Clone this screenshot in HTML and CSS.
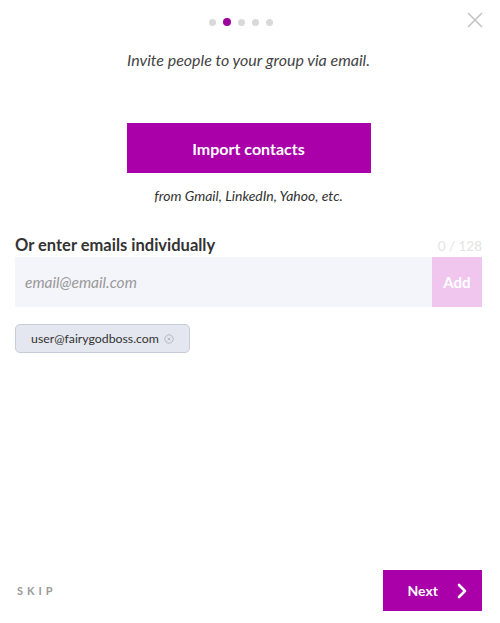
FILE: index.html
```html
<!DOCTYPE html>
<html>
<head>
<meta charset="utf-8">
<link rel="stylesheet" href="styles.css">
</head>
<body>
<div class="modal">
  <div class="header">
    <div class="dots">
      <span class="dot"></span>
      <span class="dot active"></span>
      <span class="dot"></span>
      <span class="dot"></span>
      <span class="dot"></span>
    </div>
    <button class="close" aria-label="Close">
      <svg width="16" height="16" viewBox="0 0 16 16"><path d="M1 1L15 15M15 1L1 15" stroke="#c4c4c4" stroke-width="1.6" fill="none"/></svg>
    </button>
  </div>
  <p class="subtitle">Invite people to your group via email.</p>
  <div class="import-wrap">
    <button class="import">Import contacts</button>
  </div>
  <p class="from">from Gmail, LinkedIn, Yahoo, etc.</p>
  <div class="label-row">
    <span class="label">Or enter emails individually</span>
    <span class="count">0 / 128</span>
  </div>
  <div class="input-row">
    <div class="input">email@email.com</div>
    <button class="add">Add</button>
  </div>
  <div class="chips">
    <span class="chip">user@fairygodboss.com
      <svg class="chip-x" width="10" height="10" viewBox="0 0 10 10"><circle cx="5" cy="5" r="4.2" fill="none" stroke="#b4b8c2" stroke-width="1"/><path d="M3.5 3.5L6.5 6.5M6.5 3.5L3.5 6.5" stroke="#b4b8c2" stroke-width="1"/></svg>
    </span>
  </div>
  <div class="footer">
    <span class="skip">SKIP</span>
    <button class="next">Next
      <svg width="12" height="16" viewBox="0 0 12 16"><path d="M3 2L9 8L3 14" stroke="#fff" stroke-width="2.6" fill="none" stroke-linecap="round" stroke-linejoin="round"/></svg>
    </button>
  </div>
</div>
</body>
</html>
```
FILE: styles.css
```css
* { box-sizing: border-box; }
html, body { margin: 0; padding: 0; background: #fff; }
body { font-family: Lato, "Open Sans", sans-serif; color: #333; }
button { font-family: inherit; border: none; cursor: pointer; }

.modal {
  height: 623px;
  display: flex;
  flex-direction: column;
  padding: 0 18px 12px 15px;
}

.header {
  position: relative;
  height: 44px;
  display: flex;
  align-items: center;
  justify-content: center;
}
.dots { display: flex; align-items: center; gap: 7px; margin-right: 16px; }
.dot { width: 7px; height: 7px; border-radius: 50%; background: #d9d9d9; }
.dot.active { width: 8px; height: 8px; background: #9b009b; }
.close {
  position: absolute;
  right: -1px;
  top: 12px;
  background: none;
  padding: 0;
  width: 16px;
  height: 16px;
}

.subtitle {
  margin: 6px 0 0;
  text-align: center;
  font-style: italic;
  font-size: 16px;
  color: #444;
  line-height: 20px;
}

.import-wrap { display: flex; justify-content: center; margin-top: 53px; }
.import {
  width: 244px;
  height: 50px;
  background: #a900a9;
  color: #fff;
  font-weight: 700;
  font-size: 16px;
}

.from {
  margin: 14px 0 0;
  text-align: center;
  font-style: italic;
  font-size: 14px;
  color: #333;
  line-height: 18px;
}

.label-row {
  margin-top: 30px;
  display: flex;
  justify-content: space-between;
  align-items: baseline;
}
.label { font-size: 16.5px; font-weight: 700; color: #333; line-height: 20px; }
.count { font-size: 13.5px; color: #e4e4e4; }

.input-row { display: flex; margin-top: 2px; height: 50px; }
.input {
  flex: 1;
  background: #f4f4fb;
  font-style: italic;
  font-size: 15.5px;
  color: #999;
  display: flex;
  align-items: center;
  padding-left: 10px;
}
.add {
  width: 50px;
  background: #f0c6ef;
  color: #fff;
  font-weight: 700;
  font-size: 15px;
}

.chips { margin-top: 17px; display: flex; }
.chip {
  height: 29px;
  width: 175px;
  display: flex;
  align-items: center;
  justify-content: center;
  gap: 5px;
  background: #e4e7ef;
  border: 1px solid #c8ccd8;
  border-radius: 5px;
  font-size: 12.3px;
  color: #333;
}

.footer {
  margin-top: auto;
  display: flex;
  justify-content: space-between;
  align-items: center;
}
.skip {
  margin-left: 2px;
  font-size: 11px;
  font-weight: 700;
  letter-spacing: 4px;
  color: #999;
}
.next {
  width: 99px;
  height: 41px;
  background: #a900a9;
  color: #fff;
  font-weight: 700;
  font-size: 14px;
  display: flex;
  align-items: center;
  justify-content: flex-end;
  gap: 18px;
  padding-right: 14px;
}
```
